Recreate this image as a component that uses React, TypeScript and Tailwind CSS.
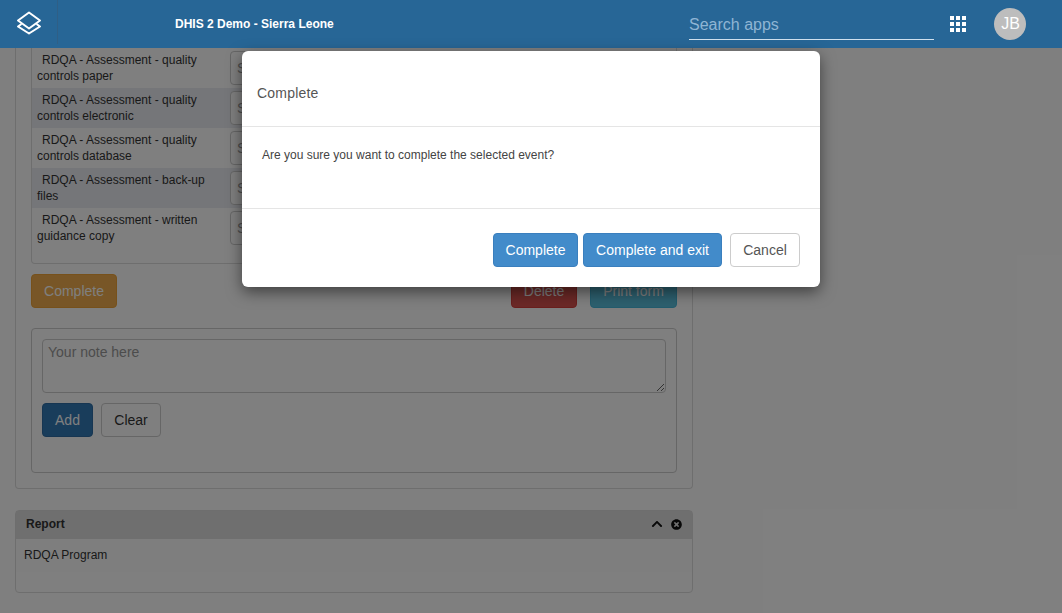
import { FaChevronUp, FaTimesCircle } from 'react-icons/fa'

const rows = [
  { first: 'RDQA - Assessment - quality', second: 'controls paper', shaded: false },
  { first: 'RDQA - Assessment - quality', second: 'controls electronic', shaded: true },
  { first: 'RDQA - Assessment - quality', second: 'controls database', shaded: false },
  { first: 'RDQA - Assessment - back-up', second: 'files', shaded: true },
  { first: 'RDQA - Assessment - written', second: 'guidance copy', shaded: false },
]

function DhisLogo() {
  return (
    <svg width="26" height="24" viewBox="0 0 26 24" fill="none" stroke="white" strokeWidth="2" strokeLinejoin="round">
      <path d="M13 1.5 24 9.5 13 17.5 2 9.5Z" />
      <path d="M5.5 13 2 15.5 13 22.5 24 15.5 20.5 13" />
    </svg>
  )
}

function AppsIcon() {
  return (
    <div className="grid grid-cols-3 gap-[2px]">
      {Array.from({ length: 9 }).map((_, i) => (
        <div key={i} className="size-[4px] bg-white" />
      ))}
    </div>
  )
}

export default function App() {
  return (
    <div className="relative h-[613px] w-[1062px] overflow-hidden bg-white font-['Liberation_Sans',Arial,sans-serif] text-[12px] text-[#333]">
      {/* Top bar */}
      <header className="relative z-20 flex h-[48px] items-center bg-[#276696]">
        <div className="flex h-[44px] w-[58px] items-center justify-center self-start border-r border-[#2f5f86] pl-[1px] pt-[2px]">
          <DhisLogo />
        </div>
        <div className="ml-[117px] w-[514px] text-[12px] font-bold text-white">DHIS 2 Demo - Sierra Leone</div>
        <div className="flex h-[32px] w-[245px] items-center border-b border-[#cfe0ee] pt-[2px] text-[16px] text-[#8fb5d4]">
          Search apps
        </div>
        <div className="ml-[16px]">
          <AppsIcon />
        </div>
        <div className="ml-[28px] flex size-[32px] items-center justify-center rounded-full bg-[#bdbdbd] pl-[1px] text-[16px] text-white">
          JB
        </div>
      </header>

      {/* Page behind the dialog */}
      <main className="h-[565px] overflow-hidden px-[15px]">
        <section className="h-[441px] w-[678px] rounded-b border border-t-0 border-[#ddd] px-[15px]">
          <div className="h-[216px] rounded-b border border-t-0 border-[#ddd]">
            {rows.map((row) => (
              <div key={row.second} className={`flex h-[40px] ${row.shaded ? 'bg-[#ebedf3]' : ''}`}>
                <div className="w-[198px] pl-[5px] pt-[4px] leading-[16px]">
                  <div className="pl-[5px]">{row.first}</div>
                  <div>{row.second}</div>
                </div>
                <div className="mt-[3px] h-[34px] w-[300px] rounded border border-[#ccc] bg-white px-[6px] py-[6px] text-[14px] text-[#999]">
                  S
                </div>
              </div>
            ))}
          </div>

          <div className="mt-[10px] flex h-[34px] items-center text-[14px] text-white">
            <button className="h-[34px] w-[86px] rounded border border-[#eea236] bg-[#f0ad4e]">Complete</button>
            <button className="ml-[394px] h-[34px] w-[66px] rounded border border-[#d43f3a] bg-[#d9534f]">Delete</button>
            <button className="ml-[13px] h-[34px] w-[87px] rounded border border-[#46b8da] bg-[#5bc0de]">Print form</button>
          </div>

          <div className="mt-[20px] h-[145px] w-[646px] rounded border border-[#ccc] px-[10px] pt-[10px]">
            <textarea
              readOnly
              placeholder="Your note here"
              className="block h-[54px] w-[624px] rounded border border-[#ccc] bg-white px-[5px] py-[2px] text-[14px] placeholder:text-[#999]"
            />
            <div className="mt-[10px] flex gap-[8px] text-[14px]">
              <button className="h-[34px] w-[51px] rounded border border-[#2e6da4] bg-[#337ab7] text-white">Add</button>
              <button className="h-[34px] w-[60px] rounded border border-[#ccc] bg-white">Clear</button>
            </div>
          </div>
        </section>

        <section className="mt-[21px] h-[83px] w-[678px] rounded border border-[#ddd]">
          <div className="flex h-[28px] items-center bg-[#dedede] pb-[2px] pl-[10px] pr-[10px] font-bold">
            <span>Report</span>
            <div className="ml-auto flex items-center gap-[8px] text-[#111]">
              <FaChevronUp className="size-[12px]" />
              <FaTimesCircle className="size-[11px]" />
            </div>
          </div>
          <div className="h-[33px] bg-[#fcfcfc] pl-[8px] pt-[8px] leading-[16px]">RDQA Program</div>
        </section>
      </main>

      {/* Backdrop */}
      <div className="absolute inset-x-0 bottom-0 top-[48px] z-10 bg-black/50" />

      {/* Dialog */}
      <div className="absolute left-[242px] top-[51px] z-30 h-[236px] w-[578px] rounded-[6px] bg-white shadow-[0_5px_15px_rgba(0,0,0,0.5)]">
        <div className="flex h-[76px] items-center border-b border-[#e5e5e5] pl-[15px] pt-[10px] text-[14px] tracking-[0.2px] text-[#555]">
          Complete
        </div>
        <div className="h-[82px] border-b border-[#e5e5e5] pl-[20px] pt-[20px] leading-[16px] text-[#444]">
          Are you sure you want to complete the selected event?
        </div>
        <div className="flex justify-end pr-[20px] pt-[24px] text-[14px]">
          <button className="h-[34px] w-[85px] rounded border border-[#3a7fbe] bg-[#428bca] text-white">Complete</button>
          <button className="ml-[5px] h-[34px] w-[139px] rounded border border-[#3a7fbe] bg-[#428bca] text-white">Complete and exit</button>
          <button className="ml-[8px] h-[34px] w-[70px] rounded border border-[#ccc] bg-white text-[#555]">Cancel</button>
        </div>
      </div>
    </div>
  )
}
